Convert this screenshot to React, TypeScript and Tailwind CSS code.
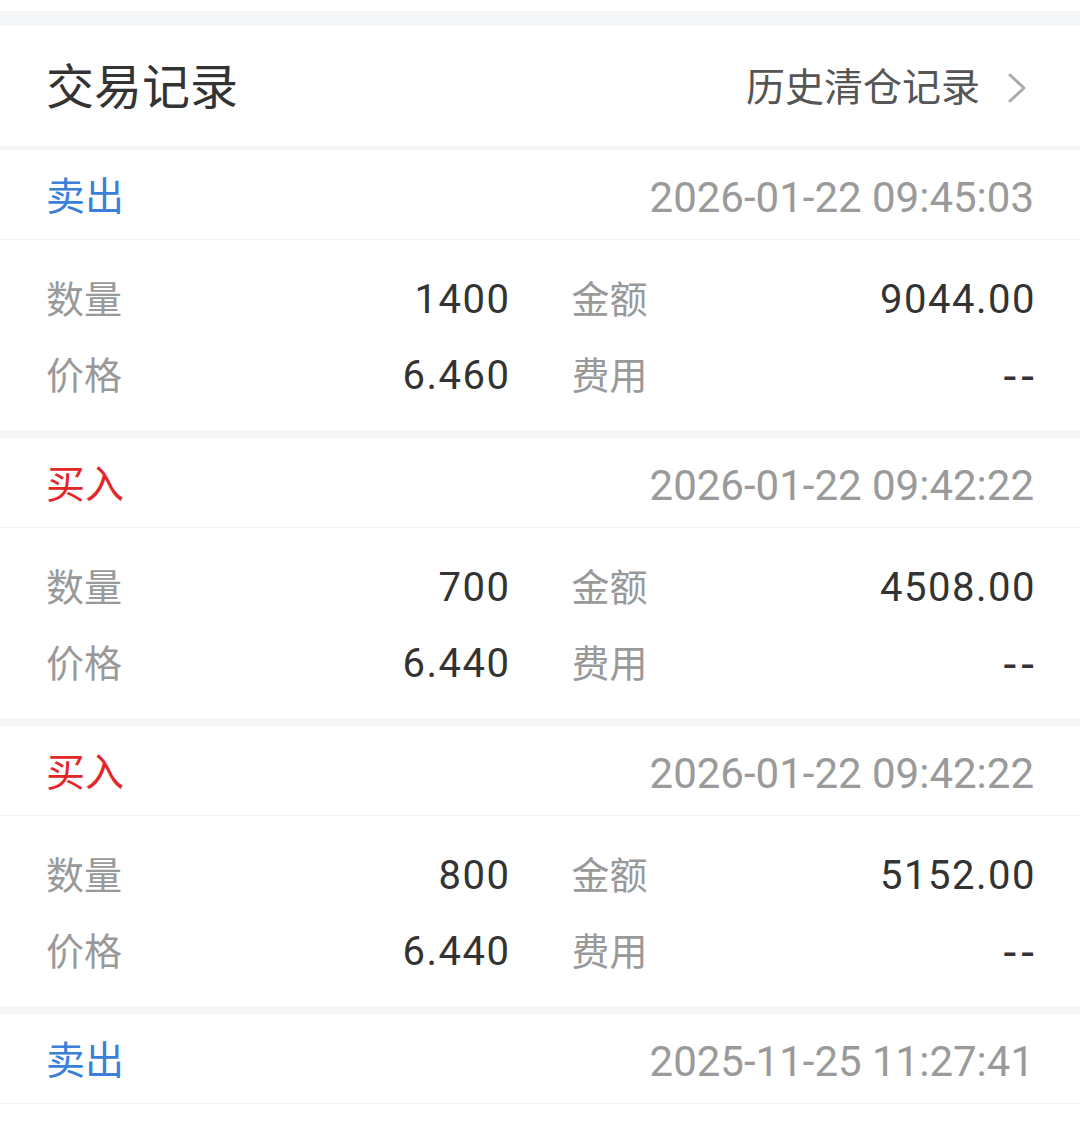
const trades = [
  { side: '卖出', time: '2026-01-22 09:45:03', qty: '1400', amount: '9044.00', price: '6.460', fee: '--' },
  { side: '买入', time: '2026-01-22 09:42:22', qty: '700', amount: '4508.00', price: '6.440', fee: '--' },
  { side: '买入', time: '2026-01-22 09:42:22', qty: '800', amount: '5152.00', price: '6.440', fee: '--' },
  { side: '卖出', time: '2025-11-25 11:27:41' },
];

type Trade = {
  side: string;
  time: string;
  qty?: string;
  amount?: string;
  price?: string;
  fee?: string;
};

const font = "font-['Roboto','Noto_Sans_CJK_SC',sans-serif]";

function Cell({ label, value }: { label: string; value: string }) {
  const empty = value === '--';
  return (
    <div className="flex h-[76px] items-center justify-between">
      <span className="text-[38px] text-[#999999]">{label}</span>
      {empty ? (
        <span className="-mr-[5px] text-[46px] tracking-[5px] text-[#333333]">--</span>
      ) : (
        <span className="-mr-[2px] text-[40px] tracking-[1.5px] text-[#333333]">{value}</span>
      )}
    </div>
  );
}

function TradeCard({ trade, last }: { trade: Trade; last: boolean }) {
  const sell = trade.side === '卖出';
  return (
    <div className={`bg-white ${last ? 'flex-1' : ''}`}>
      <div className="flex h-[90px] items-center justify-between border-b border-[#f0f1f3] px-[46px] pt-[6px]">
        <span className={`text-[39px] ${sell ? 'text-[#3a7fd8]' : 'text-[#e2262a]'}`}>{trade.side}</span>
        <span className="text-[42px] text-[#9a9a9a]">{trade.time}</span>
      </div>
      {trade.qty && (
        <div className="grid grid-cols-2 gap-x-[63px] px-[46px] pt-[22px] pb-4">
          <Cell label="数量" value={trade.qty} />
          <Cell label="金额" value={trade.amount ?? '--'} />
          <Cell label="价格" value={trade.price ?? '--'} />
          <Cell label="费用" value={trade.fee ?? '--'} />
        </div>
      )}
    </div>
  );
}

export default function App() {
  return (
    <div className={`flex h-[1131px] w-[1080px] flex-col overflow-hidden bg-[#f5f6f8] ${font}`}>
      <div className="h-[11px] bg-white" />
      <div className="mt-[15px] flex h-[120px] items-center justify-between bg-white px-[46px] pt-1">
        <h1 className="text-[48px] text-[#333333]">交易记录</h1>
        <div className="flex items-center gap-[26px]">
          <span className="text-[39px] text-[#555555]">历史清仓记录</span>
          <svg width="22" height="32" viewBox="0 0 22 32" fill="none" className="mr-[6px]">
            <polyline points="4,3 18,16 4,29" stroke="#aaaaaa" strokeWidth="3" strokeLinecap="round" strokeLinejoin="round" />
          </svg>
        </div>
      </div>
      <div className="mt-1 flex flex-1 flex-col gap-2">
        {trades.map((t, i) => (
          <TradeCard key={i} trade={t} last={i === trades.length - 1} />
        ))}
      </div>
    </div>
  );
}
